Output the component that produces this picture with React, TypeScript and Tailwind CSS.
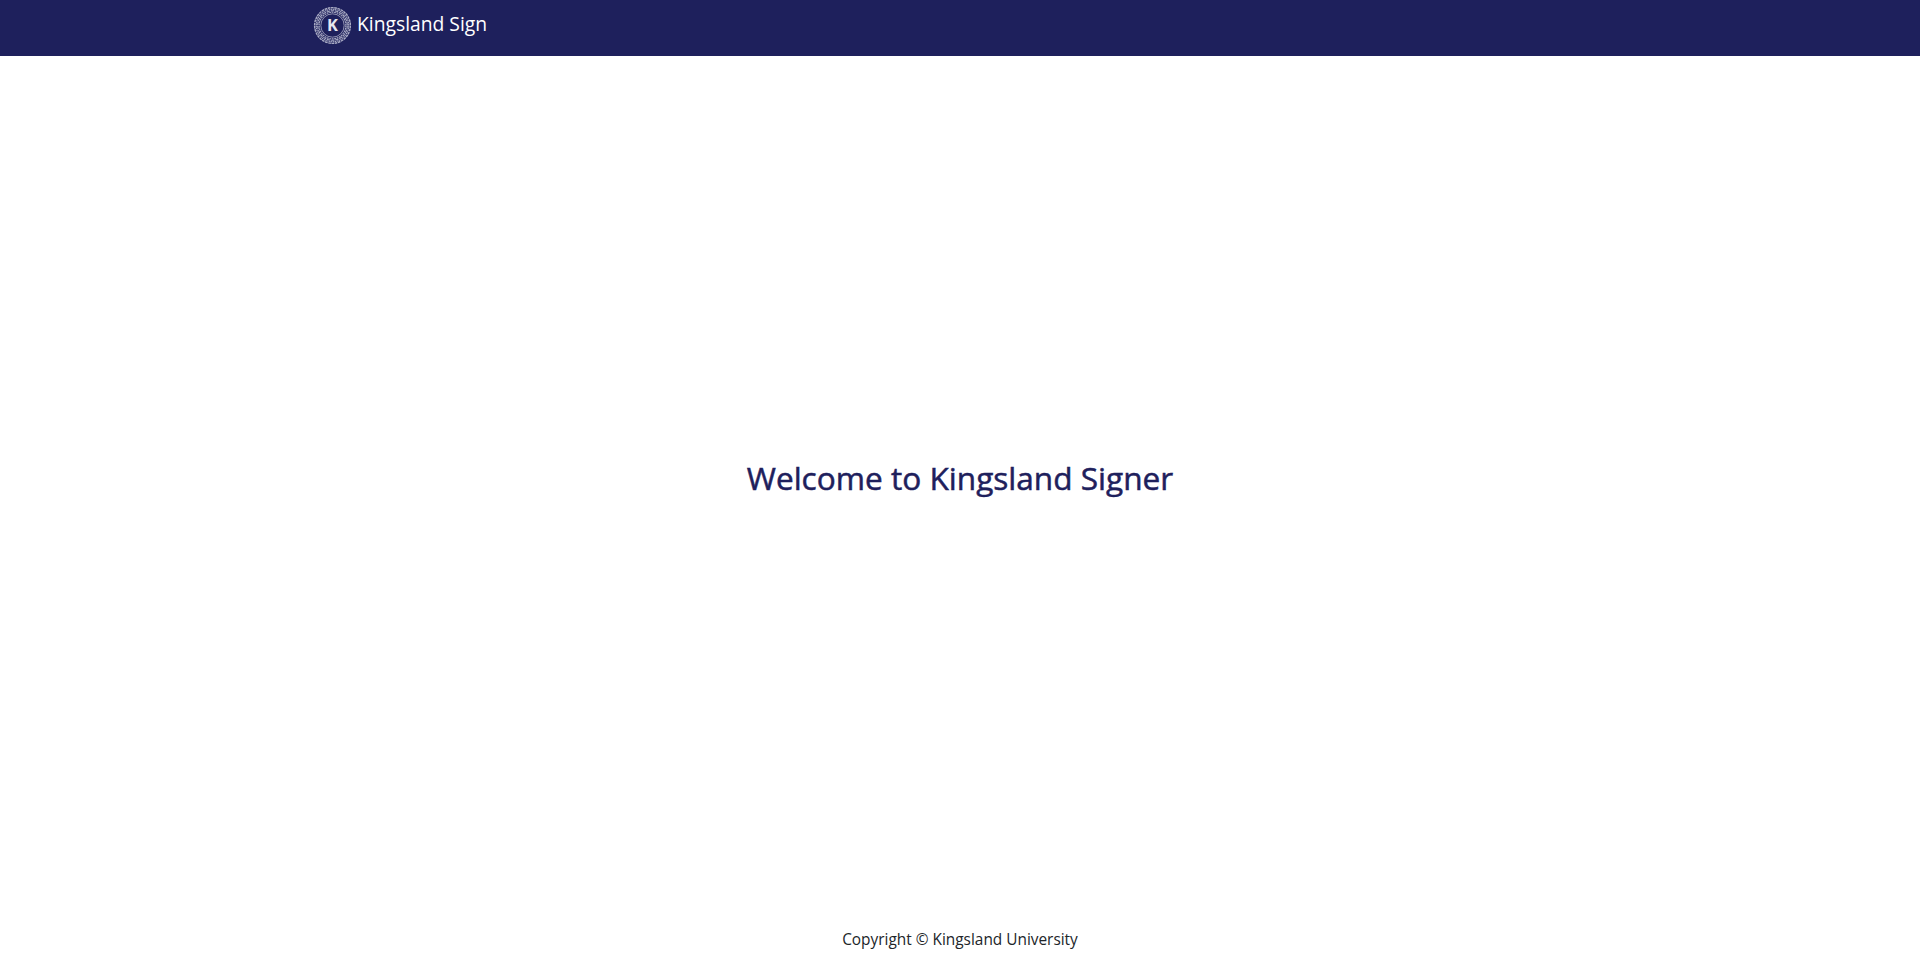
const rings = [
  { r: 17.4, dash: "2.6 0.6", w: 1.4 },
  { r: 15.8, dash: "1.4 0.5", w: 1.1 },
  { r: 14.4, dash: "3.4 0.7", w: 1.1 },
  { r: 13, dash: "1.8 0.6", w: 1.1 },
];

const Logo = () => (
  <svg width="39" height="39" viewBox="0 0 38 38" className="shrink-0">
    <circle cx="19" cy="19" r="19" fill="#1e205c" />
    <g stroke="#a9abc4" fill="none">
      {rings.map((c) => (
        <circle key={c.r} cx="19" cy="19" r={c.r} strokeDasharray={c.dash} strokeWidth={c.w} />
      ))}
    </g>
    <circle cx="19" cy="19" r="11.4" fill="#1e205c" stroke="#a9abc4" strokeWidth="0.8" />
    <text x="19" y="24.8" textAnchor="middle" fontSize="16" fontWeight="700" fill="#e6e7f0" fontFamily="'Open Sans', sans-serif">K</text>
  </svg>
);

export default function App() {
  return (
    <div className="flex min-h-[957px] flex-col bg-white font-['Open_Sans',sans-serif]">
      <header className="h-14 bg-[#1e205c]">
        <div className="mx-auto flex h-full w-[1320px] items-center gap-[5px] pb-[5px] pl-[13px]">
          <Logo />
          <span className="mb-[3px] text-[19.3px] text-white">Kingsland Sign</span>
        </div>
      </header>
      <main className="flex flex-1 items-center justify-center pb-[28px]">
        <h1 className="text-[31.6px] font-medium text-[#1e205c] [-webkit-text-stroke:0.5px_#1e205c]">
          Welcome to Kingsland Signer
        </h1>
      </main>
      <footer className="pb-[6px] text-center text-[15.4px] text-[#212529]">Copyright © Kingsland University</footer>
    </div>
  );
}
